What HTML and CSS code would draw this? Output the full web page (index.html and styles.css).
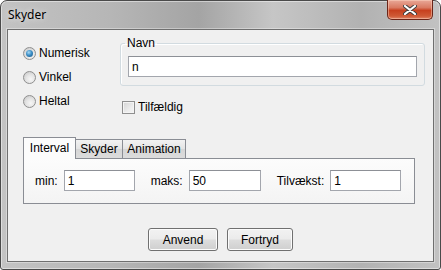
FILE: index.html
```html
<!DOCTYPE html>
<html lang="da">
<head>
    <meta charset="UTF-8">
    <title>Skyder</title>
    <link rel="stylesheet" href="styles.css">
</head>
<body>
    <div class="window">
        <div class="titlebar">
            <span class="title">Skyder</span>
            <button class="close-btn" aria-label="Luk">
                <svg width="14" height="10" viewBox="0 0 14 10">
                    <path d="M2 1 L12 9 M12 1 L2 9" stroke="#3d3d3d" stroke-width="4" stroke-linecap="round"/>
                    <path d="M2 1 L12 9 M12 1 L2 9" stroke="#fff" stroke-width="2.2" stroke-linecap="round"/>
                </svg>
            </button>
        </div>
        <div class="client">
            <div class="top-section">
                <div class="radio-group">
                    <label class="radio-row"><span class="radio checked"></span>Numerisk</label>
                    <label class="radio-row"><span class="radio"></span>Vinkel</label>
                    <label class="radio-row"><span class="radio"></span>Heltal</label>
                </div>
                <div class="name-column">
                    <fieldset class="name-box">
                        <legend>Navn</legend>
                        <input class="text-field name-field" type="text" value="n">
                    </fieldset>
                    <label class="check-row"><span class="checkbox"></span>Tilfældig</label>
                </div>
            </div>

            <div class="tabs">
                <div class="tab-strip">
                    <div class="tab tab-interval active">Interval</div>
                    <div class="tab tab-skyder">Skyder</div>
                    <div class="tab tab-animation">Animation</div>
                </div>
                <div class="tab-panel">
                    <div class="field-group">
                        <span>min:</span>
                        <input class="text-field small-field" type="text" value="1">
                    </div>
                    <div class="field-group">
                        <span>maks:</span>
                        <input class="text-field small-field wide" type="text" value="50">
                    </div>
                    <div class="field-group">
                        <span>Tilvækst:</span>
                        <input class="text-field small-field" type="text" value="1">
                    </div>
                </div>
            </div>

            <div class="buttons">
                <button class="btn btn-apply">Anvend</button>
                <button class="btn btn-cancel">Fortryd</button>
            </div>
        </div>
    </div>
</body>
</html>
```

FILE: styles.css
```css
* {
    box-sizing: border-box;
}

body {
    margin: 0;
    font-family: "Liberation Sans", Arial, sans-serif;
    font-size: 12px;
    color: #000;
}

.window {
    position: relative;
    width: 441px;
    height: 270px;
    padding: 0 6px 6px;
    border: 1px solid #4a4a4a;
    border-radius: 7px 7px 3px 3px;
    background: linear-gradient(90deg, #c3c3c3 0%, #b6b6b6 25%, #a4a4a4 45%, #c6c6c6 62%, #b2b2b2 82%, #c2c2c2 100%);
    box-shadow: inset 0 0 0 1px rgba(255, 255, 255, 0.45);
}

.titlebar {
    height: 28px;
    display: flex;
    align-items: center;
    padding-left: 1px;
}

.title {
    font-family: "Noto Sans", "Open Sans", sans-serif;
    font-size: 12px;
    padding-bottom: 1px;
    text-shadow: 0 0 6px rgba(255, 255, 255, 0.8);
}

.close-btn {
    position: absolute;
    top: -1px;
    right: 7px;
    width: 46px;
    height: 20px;
    padding: 0;
    border: 1px solid #6b2518;
    border-top: none;
    border-radius: 0 0 5px 5px;
    background: linear-gradient(#e9a898 0%, #d97a62 40%, #c7401f 55%, #cf5a36 85%, #e0856a 100%);
    box-shadow: inset 0 0 0 1px rgba(255, 220, 200, 0.45);
    display: flex;
    align-items: center;
    justify-content: center;
}

.client {
    height: 233px;
    border: 1px solid #6f6f6f;
    background: #f0f0f0;
    box-shadow: 0 0 0 1px rgba(255, 255, 255, 0.35);
}

/* top part: radios + name */
.top-section {
    height: 107px;
    display: flex;
    align-items: flex-start;
}

.radio-group {
    width: 112px;
    padding: 11px 0 0 15px;
}

.radio-row {
    height: 24px;
    display: flex;
    align-items: center;
    gap: 3px;
}

.radio {
    position: relative;
    width: 13px;
    height: 13px;
    border: 1px solid #8f8f8f;
    border-radius: 50%;
    background: radial-gradient(circle at 60% 65%, #f6f6f6 0%, #e4e4e4 45%, #cfcfcf 80%);
}

.radio.checked::after {
    content: "";
    position: absolute;
    left: 2px;
    top: 2px;
    width: 7px;
    height: 7px;
    border-radius: 50%;
    background: radial-gradient(circle at 40% 35%, #a9dbf6 0%, #3d8fc7 45%, #13507f 100%);
}

.name-column {
    padding-top: 6px;
}

.name-box {
    width: 305px;
    margin: 0;
    padding: 0 7px 8px;
    border: 1px solid #d2dbe0;
    border-radius: 3px;
    box-shadow: inset 1px 1px 0 #fff;
}

.name-box legend {
    margin-left: -3px;
    padding: 0 2px;
    line-height: 14px;
}

.text-field {
    height: 21px;
    padding: 0 3px;
    border: 1px solid #a3a6ad;
    border-top-color: #8d9096;
    background: #fff;
    font-family: inherit;
    font-size: 12px;
    color: #000;
    outline: none;
}

.name-field {
    display: block;
    width: 289px;
    margin-top: 6px;
}

.check-row {
    margin: 14px 0 0 2px;
    height: 14px;
    display: flex;
    align-items: center;
    gap: 3px;
}

.checkbox {
    width: 13px;
    height: 13px;
    border: 1px solid #8f8f8f;
    background: linear-gradient(135deg, #d4d4d4 0%, #ececec 60%, #f6f6f6 100%);
    box-shadow: inset 0 0 0 1px #f4f4f4;
}

/* tabbed pane */
.tabs {
    margin-left: 15px;
    width: 392px;
}

.tab-strip {
    display: flex;
    align-items: flex-end;
    height: 21px;
}

.tab {
    height: 19px;
    border: 1px solid #8a8d94;
    border-bottom: none;
    background: linear-gradient(#f2f2f2, #e4e4e4 50%, #d6d6d6 51%, #dcdcdc);
    text-align: center;
    line-height: 18px;
}

.tab + .tab {
    margin-left: -1px;
}

.tab.active {
    position: relative;
    height: 22px;
    margin-bottom: -1px;
    background: #fcfcfc;
    line-height: 20px;
    z-index: 1;
}

.tab-interval {
    width: 53px;
}

.tab-skyder {
    width: 48px;
}

.tab-animation {
    width: 64px;
}

.tab-panel {
    height: 46px;
    border: 1px solid #8a8d94;
    background: linear-gradient(#fcfcfc, #f4f4f4);
    display: flex;
    align-items: center;
    gap: 16px;
    padding: 0 0 1px 11px;
}

.field-group {
    display: flex;
    align-items: center;
    gap: 6px;
}

.small-field {
    width: 71px;
}

.small-field.wide {
    width: 72px;
}

/* bottom buttons */
.buttons {
    margin-top: 24px;
    display: flex;
    justify-content: center;
    gap: 9px;
}

.btn {
    height: 23px;
    padding: 0;
    border: 1px solid #707070;
    border-radius: 3px;
    background: linear-gradient(#f2f2f2 0%, #ebebeb 48%, #dddddd 52%, #cfcfcf 100%);
    box-shadow: inset 0 0 0 1px #fcfcfc;
    font-family: inherit;
    font-size: 12px;
    color: #000;
}

.btn-apply {
    width: 70px;
}

.btn-cancel {
    width: 66px;
}
```
